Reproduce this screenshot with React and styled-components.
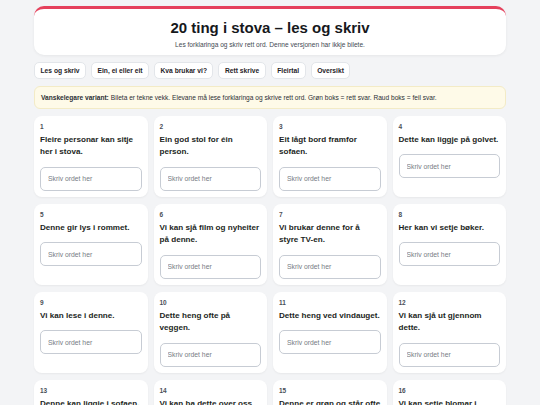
import React from 'react';
import styled, { createGlobalStyle } from 'styled-components';

const Global = createGlobalStyle`
  html, body {
    margin: 0;
    padding: 0;
    background: #f3f4f6;
    font-family: "Liberation Sans", Arial, sans-serif;
    color: #1f2328;
  }
  * { box-sizing: border-box; }
`;

const Page = styled.div`
  padding: 6px 34px 20px 34px;
  display: flex;
  flex-direction: column;
  gap: 7px;
`;

const Header = styled.header`
  background: #fff;
  border-radius: 10px;
  border-top: 3px solid #e5405c;
  box-shadow: 0 1px 3px rgba(0, 0, 0, 0.06);
  padding: 10px 12px 6px;
  text-align: center;
`;

const Title = styled.h1`
  margin: 0;
  font-size: 15px;
  line-height: 18px;
  font-weight: 700;
  color: #16181c;
`;

const Subtitle = styled.p`
  margin: 3px 0 0;
  font-size: 6.6px;
  line-height: 9px;
  color: #444a52;
`;

const Nav = styled.nav`
  display: flex;
  gap: 5px;
  flex-wrap: wrap;
`;

const NavButton = styled.button`
  font-family: inherit;
  font-size: 6.7px;
  font-weight: 700;
  color: #1f2328;
  background: #fff;
  border: 1px solid #e3e6ea;
  border-radius: 5px;
  height: 17px;
  padding: 0 5.5px;
  cursor: pointer;
`;

const Note = styled.div`
  background: #fefae8;
  border: 1px solid #f3ebc6;
  border-radius: 6px;
  padding: 0 6px;
  height: 23px;
  display: flex;
  align-items: center;
  font-size: 6.6px;
  color: #2b2f34;

  b {
    font-weight: 700;
    margin-right: 2px;
  }
`;

const Grid = styled.div`
  display: grid;
  grid-template-columns: repeat(4, 1fr);
  column-gap: 6px;
  row-gap: 7px;
`;

const Card = styled.div`
  background: #fff;
  border-radius: 8px;
  box-shadow: 0 1px 2px rgba(0, 0, 0, 0.05);
  padding: 6px 6px 6px;
  display: flex;
  flex-direction: column;
  min-height: 81px;
`;

const Num = styled.div`
  font-size: 6.5px;
  line-height: 9px;
  font-weight: 700;
  color: #4a4f57;
`;

const Question = styled.div`
  margin-top: 2.5px;
  font-size: 8.1px;
  line-height: 12.7px;
  font-weight: 700;
  color: #1c1f23;
`;

const Answer = styled.input`
  margin-top: 8px;
  width: 100%;
  height: 24px;
  border: 1.5px solid #c7ccd4;
  border-radius: 5px;
  padding: 0 7px;
  font-family: inherit;
  font-size: 6.8px;
  color: #222;
  background: #fff;
  outline: none;

  &::placeholder {
    color: #777c84;
  }
`;

const tabs = ['Les og skriv', 'Ein, ei eller eit', 'Kva brukar vi?', 'Rett skrive', 'Fleirtal', 'Oversikt'];

const items = [
  'Fleire personar kan sitje her i stova.',
  'Ein god stol for éin person.',
  'Eit lågt bord framfor sofaen.',
  'Dette kan liggje på golvet.',
  'Denne gir lys i rommet.',
  'Vi kan sjå film og nyheiter på denne.',
  'Vi brukar denne for å styre TV-en.',
  'Her kan vi setje bøker.',
  'Vi kan lese i denne.',
  'Dette heng ofte på veggen.',
  'Dette heng ved vindauget.',
  'Vi kan sjå ut gjennom dette.',
  'Denne kan liggje i sofaen.',
  'Vi kan ha dette over oss når vi kvilar.',
  'Denne er grøn og står ofte i vindauget.',
  'Vi kan setje blomar i denne.',
  'Vi kan sitje på denne.',
  'Denne viser kva tid det er.',
  'Her kan vi henge jakka.',
  'Vi brukar denne for å høyre musikk.',
];

export default function App() {
  return (
    <>
      <Global />
      <Page>
        <Header>
          <Title>20 ting i stova – les og skriv</Title>
          <Subtitle>Les forklaringa og skriv rett ord. Denne versjonen har ikkje bilete.</Subtitle>
        </Header>

        <Nav>
          {tabs.map(t => <NavButton key={t}>{t}</NavButton>)}
        </Nav>

        <Note>
          <b>Vanskelegare variant:</b> Bileta er tekne vekk. Elevane må lese forklaringa og skrive rett ord. Grøn boks = rett svar. Raud boks = feil svar.
        </Note>

        <Grid>
          {items.map((q, i) => (
            <Card key={i}>
              <Num>{i + 1}</Num>
              <Question>{q}</Question>
              <Answer placeholder="Skriv ordet her" />
            </Card>
          ))}
        </Grid>
      </Page>
    </>
  );
}
